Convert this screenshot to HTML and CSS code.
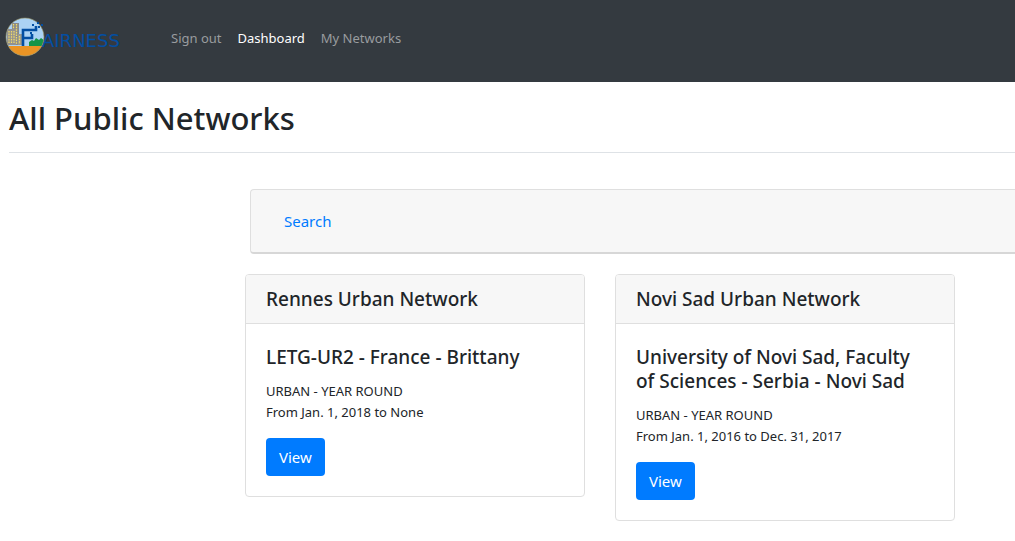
FILE: index.html
```html
<!DOCTYPE html>
<html lang="en">
<head>
<meta charset="utf-8">
<meta name="viewport" content="width=device-width, initial-scale=1">
<title>All Public Networks</title>
<link rel="stylesheet" href="styles.css">
</head>
<body>
<header class="navbar">
  <a class="brand" href="#" aria-label="Fairness">
    <svg class="brand-icon" viewBox="0 0 40 40" aria-hidden="true">
      <defs><clipPath id="disc"><circle cx="20" cy="20" r="19"/></clipPath></defs>
      <g clip-path="url(#disc)">
        <rect width="40" height="40" fill="#abd2f4"/>
        <path d="M24 29v-4l3-2 2 1 2-3 3 2 2-2 4 3v5z" fill="#159447"/>
        <rect y="29" width="40" height="11" fill="#ea9425"/>
        <path d="M7 6h7v22H7z" fill="#88898a"/>
        <path d="M2 12h9v16H2z" fill="#929190"/>
        <path d="M13 17h4v11h-4z" fill="#9b9a90"/>
        <path d="M8.500 7v5M11.500 7v20M4 14v13M6.500 14v13M9 14v13M14.500 19v8" stroke="#f2dc68" stroke-width="1.300" stroke-dasharray="1.600 1"/>
      </g>
      <circle cx="20" cy="20" r="19" fill="none" stroke="#9b925e" stroke-width=".6"/>
      <path d="M18 29V13h13V9M18 21h9v-4" fill="none" stroke="#034ea2" stroke-width="2.600"/>
      <path d="M27 7h2v2h-2zM33 9h2v2h-2zM36 7h2v2h-2zM32 5h2v2h-2zM25 15h2v2h-2z" fill="#034ea2"/>
    </svg>
    <span class="brand-name">AIRNESS</span>
  </a>
  <nav class="nav-links" aria-label="Main">
    <a class="nav-link" href="#">Sign out</a>
    <a class="nav-link active" href="#" aria-current="page">Dashboard</a>
    <a class="nav-link" href="#">My Networks</a>
  </nav>
</header>
<main class="page">
  <h1 class="page-title">All Public Networks</h1>
  <div class="content">
    <section class="search-panel"><a class="search-link" href="#">Search</a></section>
    <div class="cards">
      <article class="card">
        <h2 class="card-header">Rennes Urban Network</h2>
        <div class="card-body">
          <h3 class="card-title">LETG-UR2 - France - Brittany</h3>
          <p class="card-text">URBAN - YEAR ROUND<br>From Jan. 1, 2018 to None</p>
          <a class="btn" href="#">View</a>
        </div>
      </article>
      <article class="card">
        <h2 class="card-header">Novi Sad Urban Network</h2>
        <div class="card-body">
          <h3 class="card-title">University of Novi Sad, Faculty of Sciences - Serbia - Novi Sad</h3>
          <p class="card-text">URBAN - YEAR ROUND<br>From Jan. 1, 2016 to Dec. 31, 2017</p>
          <a class="btn" href="#">View</a>
        </div>
      </article>
    </div>
  </div>
</main>
</body>
</html>
```
FILE: styles.css
```css
* { box-sizing: border-box; }
body {
  margin: 0;
  background: #fff;
  color: #212529;
  font-family: "Noto Sans", "Open Sans", sans-serif;
  font-size: 15px;
  line-height: 24px;
}
h1, h2, h3, p { margin: 0; }
a { text-decoration: none; }
.navbar {
  display: flex;
  align-items: flex-start;
  gap: 36px;
  padding: 17px 5px 23px;
  background: #343a40;
}
.brand { display: flex; width: 122px; height: 40px; color: #034ea2; }
.brand-icon { flex: none; width: 40px; height: 40px; }
.brand-name {
  margin: 12px 0 0 -3px;
  font-family: "DejaVu Sans", sans-serif;
  font-size: 18px;
}
.nav-links { display: flex; gap: 16px; padding: 9px 8px; }
.nav-link { color: #999c9f; font-size: 13px; }
.nav-link.active { color: #fff; }
.page { padding: 16px 0 20px 9px; }
.page-title {
  padding-bottom: 13px;
  border-bottom: 1px solid #dee2e6;
  font-size: 31px;
  font-weight: 500;
  line-height: 41px;
}
.content { padding: 36px 0 0 236px; }
.search-panel {
  margin-left: 5px;
  padding: 19px 33px;
  border: 1px solid #dfdfdf;
  border-right: 0;
  border-bottom: 2px solid #d7d7d7;
  border-radius: 4px 0 0 4px;
  background: #f7f7f7;
}
.search-link { color: #007bff; }
.cards { display: flex; flex-wrap: wrap; align-items: flex-start; gap: 30px; margin-top: 20px; }
.card { width: 340px; border: 1px solid #dfdfdf; border-radius: 4px; }
.card-header {
  padding: 12px 20px;
  border-bottom: 1px solid #dfdfdf;
  border-radius: 3px 3px 0 0;
  background: #f7f7f7;
  font-size: 19px;
  font-weight: 500;
  line-height: 24px;
}
.card-body { padding: 21px 20px 20px; }
.card-title {
  margin-bottom: 12px;
  padding-right: 8px;
  font-size: 19px;
  font-weight: 500;
  line-height: 24px;
}
.card-text { margin-bottom: 15px; font-size: 13px; line-height: 21px; }
.btn {
  display: inline-block;
  padding: 7px 13px;
  border-radius: 4px;
  background: #007bff;
  color: #fff;
}
```
